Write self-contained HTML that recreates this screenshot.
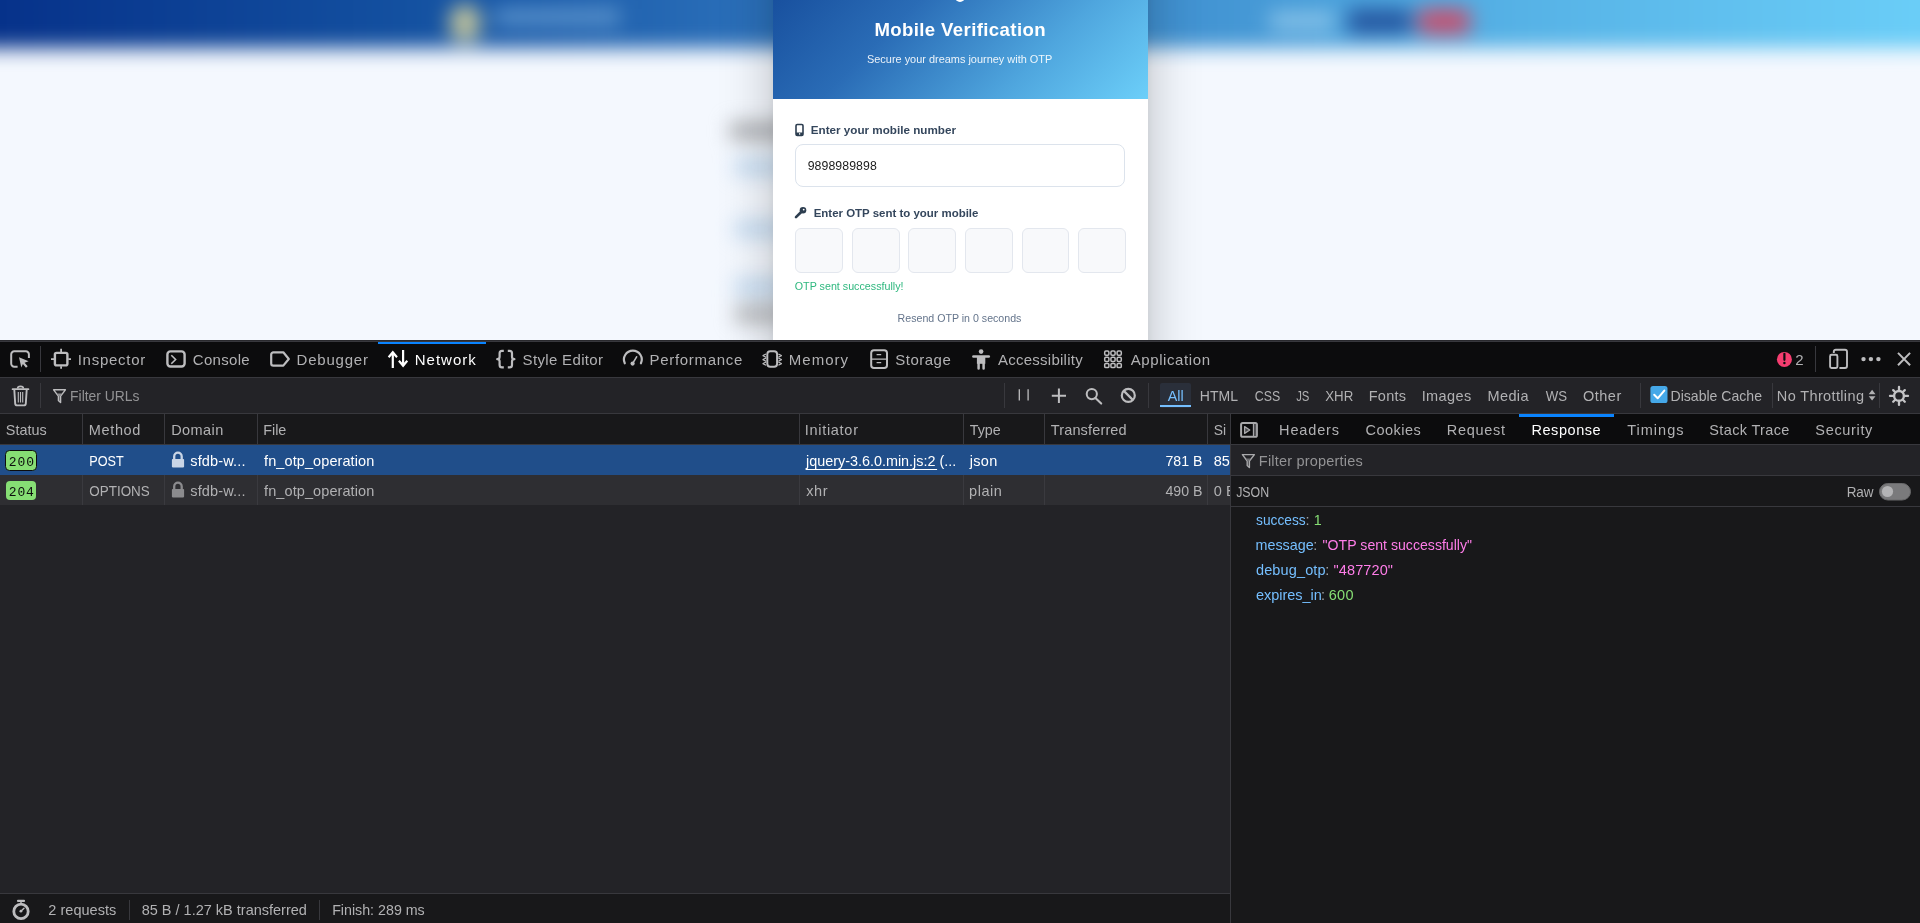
<!DOCTYPE html>
<html><head><meta charset="utf-8"><title>Network</title>
<style>
html,body{margin:0;padding:0;}
body{width:1920px;height:923px;overflow:hidden;position:relative;background:#232327;font-family:"Liberation Sans",sans-serif;}
</style></head><body>
<div style="position:absolute;left:0;top:0;width:1920px;height:340px;overflow:hidden;background:#f4f8fe">
 <div style="position:absolute;left:0;top:0;width:1920px;height:340px;filter:blur(10px)">
  <div style="position:absolute;left:-40px;top:-40px;width:2000px;height:88px;background:linear-gradient(90deg,#052f88 0%,#1350a0 22%,#2b70ba 40%,#4090d0 60%,#56b2e6 78%,#6cd0f9 100%)"></div>
  <div style="position:absolute;left:449px;top:4px;width:32px;height:38px;border-radius:50%;background:#c2c49c"></div>
  <div style="position:absolute;left:494px;top:8px;width:126px;height:18px;background:#5891cb"></div>
  <div style="position:absolute;left:1270px;top:13px;width:64px;height:16px;background:#8ec6ea"></div>
  <div style="position:absolute;left:1348px;top:9px;width:64px;height:25px;border-radius:6px;background:#2556a0"></div>
  <div style="position:absolute;left:1418px;top:9px;width:52px;height:25px;border-radius:6px;background:#c8506e"></div>
  <div style="position:absolute;left:730px;top:123px;width:60px;height:16px;background:#a4a6aa"></div>
  <div style="position:absolute;left:735px;top:160px;width:50px;height:14px;background:#b9d5f0"></div>
  <div style="position:absolute;left:735px;top:222px;width:50px;height:14px;background:#b9d5f0"></div>
  <div style="position:absolute;left:735px;top:280px;width:50px;height:14px;background:#b9d5f0"></div>
  <div style="position:absolute;left:735px;top:307px;width:50px;height:14px;background:#a8aaae"></div>
 </div>
 <div style="position:absolute;left:773px;top:-120px;width:375px;height:520px;box-shadow:0 0 50px 0 rgba(0,0,0,0.24), 0 0 10px 0 rgba(0,0,0,0.05);background:#fff"></div>
 <div style="position:absolute;left:773px;top:-120px;width:375px;height:460px;background:#fff;overflow:hidden">
  <div style="position:absolute;left:0;top:0;width:375px;height:218.5px;background:linear-gradient(135deg,#0a3a8c 0%,#2a6cb6 45%,#4fa6de 75%,#6ccff9 100%)"></div>
  <div style="position:absolute;left:182px;top:98px;width:10px;height:24px;border-radius:5px;background:#fff"></div>
  <div style="position:absolute;left:22px;top:264px;width:328px;height:41px;border:1px solid #dce3ec;border-radius:8px;background:#fff"></div>
  <div style="position:absolute;left:22.4px;top:348.4px;width:45.5px;height:42.5px;border:1px solid #e3e7ee;border-radius:6px;background:#f8f9fb"></div>
  <div style="position:absolute;left:79.3px;top:348.4px;width:45.5px;height:42.5px;border:1px solid #e3e7ee;border-radius:6px;background:#f8f9fb"></div>
  <div style="position:absolute;left:135.3px;top:348.4px;width:45.5px;height:42.5px;border:1px solid #e3e7ee;border-radius:6px;background:#f8f9fb"></div>
  <div style="position:absolute;left:192.2px;top:348.4px;width:45.5px;height:42.5px;border:1px solid #e3e7ee;border-radius:6px;background:#f8f9fb"></div>
  <div style="position:absolute;left:248.5px;top:348.4px;width:45.5px;height:42.5px;border:1px solid #e3e7ee;border-radius:6px;background:#f8f9fb"></div>
  <div style="position:absolute;left:305.3px;top:348.4px;width:45.5px;height:42.5px;border:1px solid #e3e7ee;border-radius:6px;background:#f8f9fb"></div>
 </div>
 <svg width="1920" height="340" style="position:absolute;left:0;top:0">
  <!-- phone icon -->
  <rect x="796" y="124.5" width="7" height="11" rx="1.2" fill="none" stroke="#2d3e50" stroke-width="1.6"/>
  <rect x="796" y="132.5" width="7" height="3" fill="#2d3e50"/>
  <rect x="799" y="133.2" width="1.2" height="1.4" fill="#fff"/>
  <!-- key icon -->
  <circle cx="803" cy="210.2" r="3.3" fill="#2d3e50"/>
  <circle cx="803.7" cy="209.6" r="0.9" fill="#fff"/>
  <path d="M801.2 212 L796 217.2" stroke="#2d3e50" stroke-width="2.6" stroke-linecap="round"/>
 </svg>
 <svg width="1920" height="340" style="position:absolute;left:0;top:0;will-change:transform">
<text x="874.39" y="36" font-family="Liberation Sans" font-size="18.6" font-weight="700" fill="#ffffff" textLength="171.13" lengthAdjust="spacing">Mobile Verification</text>
<text x="866.99" y="63" font-family="Liberation Sans" font-size="11.3" fill="rgba(255,255,255,0.9)" textLength="185.29" lengthAdjust="spacingAndGlyphs">Secure your dreams journey with OTP</text>
<text x="810.73" y="134" font-family="Liberation Sans" font-size="11.8" font-weight="700" fill="#34465c" textLength="145.21" lengthAdjust="spacingAndGlyphs">Enter your mobile number</text>
<text x="807.65" y="170" font-family="Liberation Sans" font-size="12.3" fill="#1a1a1a" textLength="69.07" lengthAdjust="spacing">9898989898</text>
<text x="813.73" y="217" font-family="Liberation Sans" font-size="11.8" font-weight="700" fill="#34465c" textLength="164.71" lengthAdjust="spacingAndGlyphs">Enter OTP sent to your mobile</text>
<text x="794.79" y="290" font-family="Liberation Sans" font-size="11.3" fill="#2fb87f" textLength="108.75" lengthAdjust="spacingAndGlyphs">OTP sent successfully!</text>
<text x="897.58" y="322" font-family="Liberation Sans" font-size="11.5" fill="#64748b" textLength="123.82" lengthAdjust="spacingAndGlyphs">Resend OTP in 0 seconds</text>
</svg>
</div>

<svg width="1920" height="923" style="position:absolute;left:0;top:0;will-change:transform">
<rect x="0" y="340" width="1920" height="583" fill="#232327"/><rect x="0" y="340" width="1920" height="1" fill="#2a2a2e"/><rect x="0" y="341" width="1920" height="1" fill="#38383d"/><rect x="0" y="342" width="1920" height="35" fill="#0c0c0d"/><rect x="0" y="377" width="1920" height="1" fill="#38383d"/><rect x="0" y="378" width="1920" height="35" fill="#232327"/><rect x="0" y="413" width="1920" height="1" fill="#38383d"/><rect x="0" y="414" width="1230" height="30" fill="#18181a"/><rect x="0" y="444" width="1230" height="1" fill="#38383d"/><rect x="0" y="445" width="1230" height="30" fill="#204e8a"/><rect x="0" y="475" width="1230" height="30" fill="#2e2e32"/><rect x="1231" y="414" width="689" height="509" fill="#18181a"/><rect x="1231" y="414" width="689" height="30" fill="#0c0c0d"/><rect x="1231" y="444" width="689" height="1" fill="#38383d"/><rect x="1230" y="414" width="1" height="509" fill="#38383d"/><rect x="0" y="893" width="1230" height="1" fill="#38383d"/><rect x="0" y="894" width="1230" height="29" fill="#18181a"/><rect x="378" y="342" width="108" height="2" fill="#0a84ff"/><rect x="1519" y="414" width="95" height="3" fill="#0a84ff"/><rect x="82" y="414" width="1" height="30" fill="#38383d"/><rect x="82" y="475" width="1" height="30" fill="#3a3a3f"/><rect x="164" y="414" width="1" height="30" fill="#38383d"/><rect x="164" y="475" width="1" height="30" fill="#3a3a3f"/><rect x="257" y="414" width="1" height="30" fill="#38383d"/><rect x="257" y="475" width="1" height="30" fill="#3a3a3f"/><rect x="799" y="414" width="1" height="30" fill="#38383d"/><rect x="799" y="475" width="1" height="30" fill="#3a3a3f"/><rect x="963" y="414" width="1" height="30" fill="#38383d"/><rect x="963" y="475" width="1" height="30" fill="#3a3a3f"/><rect x="1044" y="414" width="1" height="30" fill="#38383d"/><rect x="1044" y="475" width="1" height="30" fill="#3a3a3f"/><rect x="1207" y="414" width="1" height="30" fill="#38383d"/><rect x="1207" y="475" width="1" height="30" fill="#3a3a3f"/><rect x="40" y="346" width="1" height="26" fill="#38383d"/><rect x="1815" y="346" width="1" height="26" fill="#38383d"/><rect x="40" y="383" width="1" height="25" fill="#38383d"/><rect x="1004" y="383" width="1" height="25" fill="#38383d"/><rect x="1148" y="383" width="1" height="25" fill="#38383d"/><rect x="1640" y="383" width="1" height="25" fill="#38383d"/><rect x="1772" y="383" width="1" height="25" fill="#38383d"/><rect x="1879" y="383" width="1" height="25" fill="#38383d"/><rect x="129" y="900" width="1" height="20" fill="#38383d"/><rect x="319" y="900" width="1" height="20" fill="#38383d"/><rect x="1160" y="383" width="31" height="25" rx="2" fill="#2a2f3a"/><rect x="1160" y="405" width="31" height="2" fill="#75bfff"/><rect x="1231" y="445" width="689" height="30" fill="#232327"/><rect x="1231" y="475" width="689" height="1" fill="#38383d"/><rect x="1231" y="506" width="689" height="1" fill="#38383d"/><rect x="5.5" y="450.5" width="31" height="20" rx="4" fill="#86de74" stroke="#0c0c0d" stroke-width="1"/><rect x="6" y="481" width="30" height="19" rx="4" fill="#86de74"/><g fill="none" stroke="#bdbdbf" stroke-width="2" stroke-linecap="butt" stroke-linejoin="round">
 <!-- pick -->
 <path d="M17.6 366.7 H14.3 A3 3 0 0 1 11.2 363.6 V354.4 A3 3 0 0 1 14.3 351.3 H25.8 A3 3 0 0 1 28.9 354.4 V358"/>
 <path d="M19 357.3 L28.6 361.3 L24.6 362.7 L27.7 366.3 L26 367.7 L22.9 364.1 L21.3 367.4 Z" fill="#bdbdbf" stroke="none"/>
 <!-- inspector -->
 <rect x="54.9" y="352.9" width="12.5" height="12.5" rx="1.6" stroke-width="2.4"/>
 <path d="M61.1 348.8 V352 M61.1 366.3 V368.8 M51 359.1 H54 M68.3 359.1 H71" stroke-width="1.8"/>
 <!-- console -->
 <rect x="167.4" y="351.4" width="17.2" height="15.1" rx="3" stroke-width="2.4"/>
 <path d="M171.3 355.3 L175.6 359.5 L171.3 363.7" stroke-width="1.6" stroke-linejoin="miter"/>
 <!-- debugger -->
 <path d="M273.4 352.3 H283.3 L288.8 359 L283.3 365.6 H273.4 A2.2 2.2 0 0 1 271.2 363.4 V354.5 A2.2 2.2 0 0 1 273.4 352.3 Z" stroke-width="2.2"/>
 <!-- network -->
 <path d="M392.8 368 V352.5 M403.1 350 V365.5" stroke="#ffffff" stroke-width="2.2"/>
 <path d="M387.8 356.6 L392.8 350.6 L397.8 356.6 L396.2 358 L392.8 354.2 L389.4 358 Z M398.1 361.4 L403.1 367.4 L408.1 361.4 L406.5 360 L403.1 363.8 L399.7 360 Z" fill="#ffffff" stroke="none"/>
 <!-- style editor braces -->
 <path d="M503.8 350.8 H502 Q499.6 350.8 499.6 353.2 V356.8 Q499.6 359.2 497.2 359.2 Q499.6 359.2 499.6 361.6 V365 Q499.6 367.4 502 367.4 H503.8" stroke-width="2.2"/>
 <path d="M507.8 350.8 H509.6 Q512 350.8 512 353.2 V356.8 Q512 359.2 514.4 359.2 Q512 359.2 512 361.6 V365 Q512 367.4 509.6 367.4 H507.8" stroke-width="2.2"/>
 <!-- performance gauge -->
 <path d="M624.8 363.3 A8.9 8.9 0 1 1 640.9 363.3" stroke-width="2.2" stroke-linecap="round"/>
 <path d="M632.7 363.4 L636.6 356.8" stroke-width="1.6" stroke-linecap="round"/>
 <circle cx="632.6" cy="363.6" r="2.1" fill="#bdbdbf" stroke="none"/>
 <!-- memory chip -->
 <rect x="767.3" y="351.3" width="9.8" height="15.4" rx="3" stroke-width="2"/>
 <path d="M766 354 L763 355.6 L766 357.2 M766 358 L763 359.6 L766 361.2 M766 362 L763 363.6 L766 365.2 M778.4 354 L781.4 355.6 L778.4 357.2 M778.4 358 L781.4 359.6 L778.4 361.2 M778.4 362 L781.4 363.6 L778.4 365.2" stroke-width="1.2"/>
 <!-- storage -->
 <rect x="871.2" y="350.2" width="15.8" height="17.8" rx="2.8" stroke-width="2"/>
 <path d="M871.2 359.1 H887 M876.6 354.6 H881.2 M876.6 362.6 H881.2" stroke-width="1.4"/>
 <!-- accessibility -->
 <circle cx="981.1" cy="351.6" r="2.3" fill="#bdbdbf" stroke="none"/>
 <path d="M973.4 356.5 H988.8" stroke-width="2.5" stroke-linecap="round"/>
 <rect x="976.9" y="356" width="8.4" height="7.8" fill="#bdbdbf" stroke="none"/>
 <path d="M978.6 363 V368.4 M983.6 363 V368.4" stroke-width="2.5" stroke-linecap="round"/>
 <!-- application grid -->
 <g stroke-width="1.5">
  <rect x="1104.7" y="351" width="4.2" height="4.2" rx="1.2"/><rect x="1110.9" y="351" width="4.2" height="4.2" rx="1.2"/><rect x="1117.1" y="351" width="4.2" height="4.2" rx="1.2"/>
  <rect x="1104.7" y="357.2" width="4.2" height="4.2" rx="1.2"/><rect x="1110.9" y="357.2" width="4.2" height="4.2" rx="1.2"/><rect x="1117.1" y="357.2" width="4.2" height="4.2" rx="1.2"/>
  <rect x="1104.7" y="363.4" width="4.2" height="4.2" rx="1.2"/><rect x="1110.9" y="363.4" width="4.2" height="4.2" rx="1.2"/><rect x="1117.1" y="363.4" width="4.2" height="4.2" rx="1.2"/>
 </g>
 <!-- error badge -->
 <circle cx="1784.4" cy="359.4" r="7.5" fill="#f53d6f" stroke="none"/>
 <path d="M1784.4 353.8 V359.8" stroke="#0c0c0d" stroke-width="2.2" stroke-linecap="round"/>
 <circle cx="1784.4" cy="363" r="1.2" fill="#0c0c0d" stroke="none"/>
 <!-- responsive -->
 <path d="M1833.8 353 V351.6 A2 2 0 0 1 1835.8 349.8 H1845 A2 2 0 0 1 1847 351.8 V366 A2 2 0 0 1 1845 368 H1839.4" stroke-width="1.9"/>
 <rect x="1830.1" y="354.8" width="7.3" height="13.2" rx="1.4" stroke-width="1.9"/>
 <!-- meatball -->
 <circle cx="1863.5" cy="359.1" r="2.2" fill="#bdbdbf" stroke="none"/>
 <circle cx="1870.9" cy="359.1" r="2.2" fill="#bdbdbf" stroke="none"/>
 <circle cx="1878.4" cy="359.1" r="2.2" fill="#bdbdbf" stroke="none"/>
 <!-- close -->
 <path d="M1898 352.9 L1910.1 365.2 M1910.1 352.9 L1898 365.2" stroke-width="2"/>
 <!-- trash -->
 <path d="M12.6 389.2 H28.4" stroke-width="1.8" stroke-linecap="round"/>
 <path d="M17.6 388.6 A2.9 2.2 0 0 1 23.4 388.6" stroke-width="1.6"/>
 <path d="M14.3 389.8 L15.2 403.6 A2 2 0 0 0 17.2 405.4 H23.8 A2 2 0 0 0 25.8 403.6 L26.7 389.8" stroke-width="1.9"/>
 <path d="M18.3 392 V402.5 M20.5 392 V402.5 M22.7 392 V402.5" stroke-width="1.1"/>
 <!-- funnel -->
 <path d="M53.6 389.8 H65.4 L60.6 396.2 V402.6 L58.4 400.4 V396.2 Z" stroke-width="1.4"/>
 <path d="M57 393.6 H62 L59.6 396.6 L59.6 401.2 L59 400.6 V396.6 Z" fill="#8f8f92" stroke="none"/>
 <!-- pause -->
 <path d="M1019.3 389.2 V400.6 M1028.1 389.2 V400.6" stroke-width="1.3"/>
 <!-- plus -->
 <path d="M1058.9 388.6 V403 M1051.8 395.8 H1066" stroke-width="2"/>
 <!-- search -->
 <circle cx="1091.8" cy="394.1" r="5.1" stroke-width="2"/>
 <path d="M1095.4 397.9 L1101.2 403.6" stroke-width="2.1" stroke-linecap="round"/>
 <!-- block -->
 <circle cx="1128.3" cy="395.4" r="6.5" stroke-width="2.2"/>
 <path d="M1123.8 390.9 L1132.8 399.9" stroke-width="2.2"/>
 <!-- checkbox -->
 <rect x="1650.4" y="386" width="17.1" height="17" rx="2.6" fill="#45a8e8" stroke="none"/>
 <path d="M1654.2 394.8 L1657.7 398.3 L1664.3 390.6" stroke="#ffffff" stroke-width="2" stroke-linecap="round"/>
 <!-- throttle arrows -->
 <path d="M1868.7 394.3 L1872.1 389.8 L1875.5 394.3 Z M1868.7 396.3 L1872.1 400.6 L1875.5 396.3 Z" fill="#b1b1b3" stroke="none"/>
 <!-- gear -->
 <circle cx="1899" cy="395.9" r="4.9" stroke="#c4c4c6" stroke-width="2.4"/>
 <path d="M1899 386.9 V390.6 M1899 401.2 V404.9 M1890 395.9 H1893.7 M1904.3 395.9 H1908 M1893.2 390.1 L1895.4 392.3 M1902.6 399.5 L1904.8 401.7 M1904.8 390.1 L1902.6 392.3 M1895.4 399.5 L1893.2 401.7" stroke="#c4c4c6" stroke-width="2.3" stroke-linecap="round"/>
 <!-- panel toggle -->
 <rect x="1241.1" y="423" width="15.8" height="13.8" rx="1.6" stroke="#a9a9ab" stroke-width="2"/>
 <path d="M1253.5 423.5 V436.5" stroke="#a9a9ab" stroke-width="1.3"/>
 <rect x="1254.1" y="424" width="2" height="12" fill="#555558" stroke="none"/>
 <path d="M1244.6 426.6 L1249.8 430 L1244.6 433.4 Z" fill="#4a4a4d" stroke="#a9a9ab" stroke-width="1.3"/>
 <!-- side filter funnel -->
 <path d="M1242.4 454.6 H1254.4 L1249.4 461 V467.6 L1247.2 465.4 V461 Z" stroke="#a9a9ab" stroke-width="1.4"/>
 <path d="M1245.8 458.4 H1251 L1248.6 461.4 V466 L1248 465.4 V461.4 Z" fill="#6f6f72" stroke="none"/>
 <!-- stopwatch -->
 <circle cx="21" cy="911.4" r="7.2" stroke-width="2.8"/>
 <path d="M18 900.9 H24" stroke-width="2.2" stroke-linecap="round"/>
 <path d="M21 902.2 V903.6" stroke-width="1.8"/>
 <path d="M20.9 911.2 L24 908.2" stroke-width="1.4" stroke-linecap="round"/>
 <circle cx="20.9" cy="911.2" r="1.4" fill="#bdbdbf" stroke="none"/>
</g>
<!-- locks -->
<g>
 <path d="M174.2 459.6 V456.4 A3.75 3.75 0 0 1 181.7 456.4 V459.6" fill="none" stroke="#c9d5e6" stroke-width="2.3"/>
 <rect x="171.9" y="459" width="12.2" height="8.4" rx="0.8" fill="#c9d5e6"/>
 <path d="M174.2 489.6 V486.4 A3.75 3.75 0 0 1 181.7 486.4 V489.6" fill="none" stroke="#8b8b8e" stroke-width="2.3"/>
 <rect x="171.9" y="489" width="12.2" height="8.4" rx="0.8" fill="#8b8b8e"/>
</g>
<text x="77.65" y="365" font-family="Liberation Sans" font-size="15" fill="#b1b1b3" textLength="67.63" lengthAdjust="spacing">Inspector</text>
<text x="192.75" y="365" font-family="Liberation Sans" font-size="15" fill="#b1b1b3" textLength="56.91" lengthAdjust="spacing">Console</text>
<text x="296.50" y="365" font-family="Liberation Sans" font-size="15" fill="#b1b1b3" textLength="71.46" lengthAdjust="spacing">Debugger</text>
<text x="414.80" y="365" font-family="Liberation Sans" font-size="15" fill="#ffffff" textLength="60.86" lengthAdjust="spacing">Network</text>
<text x="522.62" y="365" font-family="Liberation Sans" font-size="15" fill="#b1b1b3" textLength="80.35" lengthAdjust="spacing">Style Editor</text>
<text x="649.50" y="365" font-family="Liberation Sans" font-size="15" fill="#b1b1b3" textLength="92.87" lengthAdjust="spacing">Performance</text>
<text x="788.80" y="365" font-family="Liberation Sans" font-size="15" fill="#b1b1b3" textLength="59.22" lengthAdjust="spacing">Memory</text>
<text x="895.33" y="365" font-family="Liberation Sans" font-size="15" fill="#b1b1b3" textLength="55.39" lengthAdjust="spacing">Storage</text>
<text x="998.00" y="365" font-family="Liberation Sans" font-size="15" fill="#b1b1b3" textLength="84.71" lengthAdjust="spacing">Accessibility</text>
<text x="1130.70" y="365" font-family="Liberation Sans" font-size="15" fill="#b1b1b3" textLength="79.31" lengthAdjust="spacing">Application</text>
<text x="1795.25" y="365" font-family="Liberation Sans" font-size="15" fill="#b1b1b3" textLength="9.22" lengthAdjust="spacing">2</text>
<text x="70.09" y="401" font-family="Liberation Sans" font-size="14.5" fill="#939395" textLength="69.43" lengthAdjust="spacingAndGlyphs">Filter URLs</text>
<text x="1167.70" y="401" font-family="Liberation Sans" font-size="14.5" fill="#75bfff" textLength="15.96" lengthAdjust="spacingAndGlyphs">All</text>
<text x="1199.84" y="401" font-family="Liberation Sans" font-size="14.5" fill="#b1b1b3" textLength="38.13" lengthAdjust="spacingAndGlyphs">HTML</text>
<text x="1254.78" y="401" font-family="Liberation Sans" font-size="14.5" fill="#b1b1b3" textLength="25.40" lengthAdjust="spacingAndGlyphs">CSS</text>
<text x="1296.18" y="401" font-family="Liberation Sans" font-size="14.5" fill="#b1b1b3" textLength="13.20" lengthAdjust="spacingAndGlyphs">JS</text>
<text x="1325.24" y="401" font-family="Liberation Sans" font-size="14.5" fill="#b1b1b3" textLength="28.04" lengthAdjust="spacingAndGlyphs">XHR</text>
<text x="1368.74" y="401" font-family="Liberation Sans" font-size="14.5" fill="#b1b1b3" textLength="37.28" lengthAdjust="spacing">Fonts</text>
<text x="1421.69" y="401" font-family="Liberation Sans" font-size="14.5" fill="#b1b1b3" textLength="49.50" lengthAdjust="spacing">Images</text>
<text x="1487.54" y="401" font-family="Liberation Sans" font-size="14.5" fill="#b1b1b3" textLength="40.94" lengthAdjust="spacing">Media</text>
<text x="1545.63" y="401" font-family="Liberation Sans" font-size="14.5" fill="#b1b1b3" textLength="21.34" lengthAdjust="spacingAndGlyphs">WS</text>
<text x="1582.95" y="401" font-family="Liberation Sans" font-size="14.5" fill="#b1b1b3" textLength="38.28" lengthAdjust="spacing">Other</text>
<text x="1670.54" y="401" font-family="Liberation Sans" font-size="14.5" fill="#b1b1b3" textLength="91.46" lengthAdjust="spacingAndGlyphs">Disable Cache</text>
<text x="1776.84" y="401" font-family="Liberation Sans" font-size="14.5" fill="#b1b1b3" textLength="87.13" lengthAdjust="spacing">No Throttling</text>
<text x="5.85" y="435" font-family="Liberation Sans" font-size="14.5" fill="#b1b1b3" textLength="40.86" lengthAdjust="spacingAndGlyphs">Status</text>
<text x="88.84" y="435" font-family="Liberation Sans" font-size="14.5" fill="#b1b1b3" textLength="51.51" lengthAdjust="spacing">Method</text>
<text x="171.14" y="435" font-family="Liberation Sans" font-size="14.5" fill="#b1b1b3" textLength="52.12" lengthAdjust="spacing">Domain</text>
<text x="263.14" y="435" font-family="Liberation Sans" font-size="14.5" fill="#b1b1b3" textLength="23.23" lengthAdjust="spacingAndGlyphs">File</text>
<text x="804.70" y="435" font-family="Liberation Sans" font-size="14.5" fill="#b1b1b3" textLength="53.29" lengthAdjust="spacing">Initiator</text>
<text x="969.71" y="435" font-family="Liberation Sans" font-size="14.5" fill="#b1b1b3" textLength="30.99" lengthAdjust="spacingAndGlyphs">Type</text>
<text x="1050.71" y="435" font-family="Liberation Sans" font-size="14.5" fill="#b1b1b3" textLength="75.96" lengthAdjust="spacing">Transferred</text>
<text x="1279.09" y="435" font-family="Liberation Sans" font-size="14.5" fill="#b1b1b3" textLength="59.92" lengthAdjust="spacing">Headers</text>
<text x="1365.53" y="435" font-family="Liberation Sans" font-size="14.5" fill="#b1b1b3" textLength="55.20" lengthAdjust="spacing">Cookies</text>
<text x="1446.84" y="435" font-family="Liberation Sans" font-size="14.5" fill="#b1b1b3" textLength="58.10" lengthAdjust="spacing">Request</text>
<text x="1531.44" y="435" font-family="Liberation Sans" font-size="14.5" fill="#ffffff" textLength="69.26" lengthAdjust="spacing">Response</text>
<text x="1627.21" y="435" font-family="Liberation Sans" font-size="14.5" fill="#b1b1b3" textLength="56.28" lengthAdjust="spacing">Timings</text>
<text x="1709.35" y="435" font-family="Liberation Sans" font-size="14.5" fill="#b1b1b3" textLength="80.00" lengthAdjust="spacing">Stack Trace</text>
<text x="1815.35" y="435" font-family="Liberation Sans" font-size="14.5" fill="#b1b1b3" textLength="56.99" lengthAdjust="spacing">Security</text>
<svg x="1208" y="414" width="22" height="30" overflow="hidden"><text x="5.65" y="21" font-family="Liberation Sans" font-size="14.5" fill="#b1b1b3" textLength="12.36" lengthAdjust="spacingAndGlyphs">Si</text>
</svg><text x="8.84" y="466" font-family="Liberation Mono" font-size="13" fill="#0c0c0d" textLength="25.14" lengthAdjust="spacing">200</text>
<text x="8.84" y="496" font-family="Liberation Mono" font-size="13" fill="#0c0c0d" textLength="25.01" lengthAdjust="spacing">204</text>
<text x="89.24" y="466" font-family="Liberation Sans" font-size="14.5" fill="#ffffff" textLength="34.49" lengthAdjust="spacingAndGlyphs">POST</text>
<text x="190.26" y="466" font-family="Liberation Sans" font-size="14.5" fill="#ffffff" textLength="55.19" lengthAdjust="spacing">sfdb-w...</text>
<text x="264.08" y="466" font-family="Liberation Sans" font-size="14.5" fill="#ffffff" textLength="110.18" lengthAdjust="spacing">fn_otp_operation</text>
<text x="805.96" y="466" font-family="Liberation Sans" font-size="14.5" fill="#ffffff" textLength="150.29" lengthAdjust="spacingAndGlyphs">jquery-3.6.0.min.js:2 (...</text>
<text x="969.66" y="466" font-family="Liberation Sans" font-size="14.5" fill="#ffffff" textLength="27.57" lengthAdjust="spacing">json</text>
<text x="1165.48" y="466" font-family="Liberation Sans" font-size="14.5" fill="#ffffff" textLength="37.00" lengthAdjust="spacingAndGlyphs">781 B</text>
<rect x="805.6" y="469" width="131.5" height="1" fill="#ffffff"/><svg x="1208" y="445" width="22" height="60" overflow="hidden"><text x="5.75" y="21" font-family="Liberation Sans" font-size="14.5" fill="#ffffff">85</text>
<text x="5.82" y="51" font-family="Liberation Sans" font-size="14.5" fill="#b1b1b3">0 B</text>
</svg><text x="89.35" y="496" font-family="Liberation Sans" font-size="14.5" fill="#b1b1b3" textLength="60.41" lengthAdjust="spacingAndGlyphs">OPTIONS</text>
<text x="190.26" y="496" font-family="Liberation Sans" font-size="14.5" fill="#b1b1b3" textLength="55.19" lengthAdjust="spacing">sfdb-w...</text>
<text x="264.08" y="496" font-family="Liberation Sans" font-size="14.5" fill="#b1b1b3" textLength="110.18" lengthAdjust="spacing">fn_otp_operation</text>
<text x="806.25" y="496" font-family="Liberation Sans" font-size="14.5" fill="#b1b1b3" textLength="21.42" lengthAdjust="spacing">xhr</text>
<text x="969.06" y="496" font-family="Liberation Sans" font-size="14.5" fill="#b1b1b3" textLength="32.83" lengthAdjust="spacing">plain</text>
<text x="1165.41" y="496" font-family="Liberation Sans" font-size="14.5" fill="#b1b1b3" textLength="37.06" lengthAdjust="spacingAndGlyphs">490 B</text>
<text x="1258.84" y="466" font-family="Liberation Sans" font-size="14.5" fill="#939395" textLength="103.90" lengthAdjust="spacing">Filter properties</text>
<text x="1236.18" y="497" font-family="Liberation Sans" font-size="14.5" fill="#b1b1b3" textLength="33.01" lengthAdjust="spacingAndGlyphs">JSON</text>
<text x="1846.64" y="497" font-family="Liberation Sans" font-size="14.5" fill="#b1b1b3" textLength="27.00" lengthAdjust="spacingAndGlyphs">Raw</text>
<rect x="1879.5" y="483.5" width="31" height="16.5" rx="8.25" fill="#7a7a7c" stroke="#68686a" stroke-width="1"/><circle cx="1887.5" cy="491.5" r="5.6" fill="#b4b4b6"/><text x="1256.07" y="525" font-family="Liberation Sans" font-size="14.5" fill="#75bfff" textLength="49.68" lengthAdjust="spacingAndGlyphs">success</text>
<text x="1305.49" y="525" font-family="Liberation Sans" font-size="14.5" fill="#a0a0a2">:</text>
<text x="1313.71" y="525" font-family="Liberation Sans" font-size="14.5" fill="#86de74" textLength="7.96" lengthAdjust="spacingAndGlyphs">1</text>
<text x="1255.56" y="550" font-family="Liberation Sans" font-size="14.5" fill="#75bfff" textLength="58.13" lengthAdjust="spacingAndGlyphs">message</text>
<text x="1313.29" y="550" font-family="Liberation Sans" font-size="14.5" fill="#a0a0a2">:</text>
<text x="1322.62" y="550" font-family="Liberation Sans" font-size="14.5" fill="#ff7de9" textLength="149.45" lengthAdjust="spacingAndGlyphs">&quot;OTP sent successfully&quot;</text>
<text x="1255.92" y="575" font-family="Liberation Sans" font-size="14.5" fill="#75bfff" textLength="69.69" lengthAdjust="spacing">debug_otp</text>
<text x="1325.29" y="575" font-family="Liberation Sans" font-size="14.5" fill="#a0a0a2">:</text>
<text x="1333.52" y="575" font-family="Liberation Sans" font-size="14.5" fill="#ff7de9" textLength="59.49" lengthAdjust="spacing">&quot;487720&quot;</text>
<text x="1255.92" y="600" font-family="Liberation Sans" font-size="14.5" fill="#75bfff" textLength="65.87" lengthAdjust="spacing">expires_in</text>
<text x="1321.10" y="600" font-family="Liberation Sans" font-size="14.5" fill="#a0a0a2">:</text>
<text x="1328.68" y="600" font-family="Liberation Sans" font-size="14.5" fill="#86de74" textLength="24.88" lengthAdjust="spacing">600</text>
<text x="48.27" y="915" font-family="Liberation Sans" font-size="14.5" fill="#b1b1b3" textLength="68.03" lengthAdjust="spacing">2 requests</text>
<text x="141.65" y="915" font-family="Liberation Sans" font-size="14.5" fill="#b1b1b3" textLength="165.30" lengthAdjust="spacing">85 B / 1.27 kB transferred</text>
<text x="332.14" y="915" font-family="Liberation Sans" font-size="14.5" fill="#b1b1b3" textLength="92.63" lengthAdjust="spacingAndGlyphs">Finish: 289 ms</text>
</svg>
</body></html>
